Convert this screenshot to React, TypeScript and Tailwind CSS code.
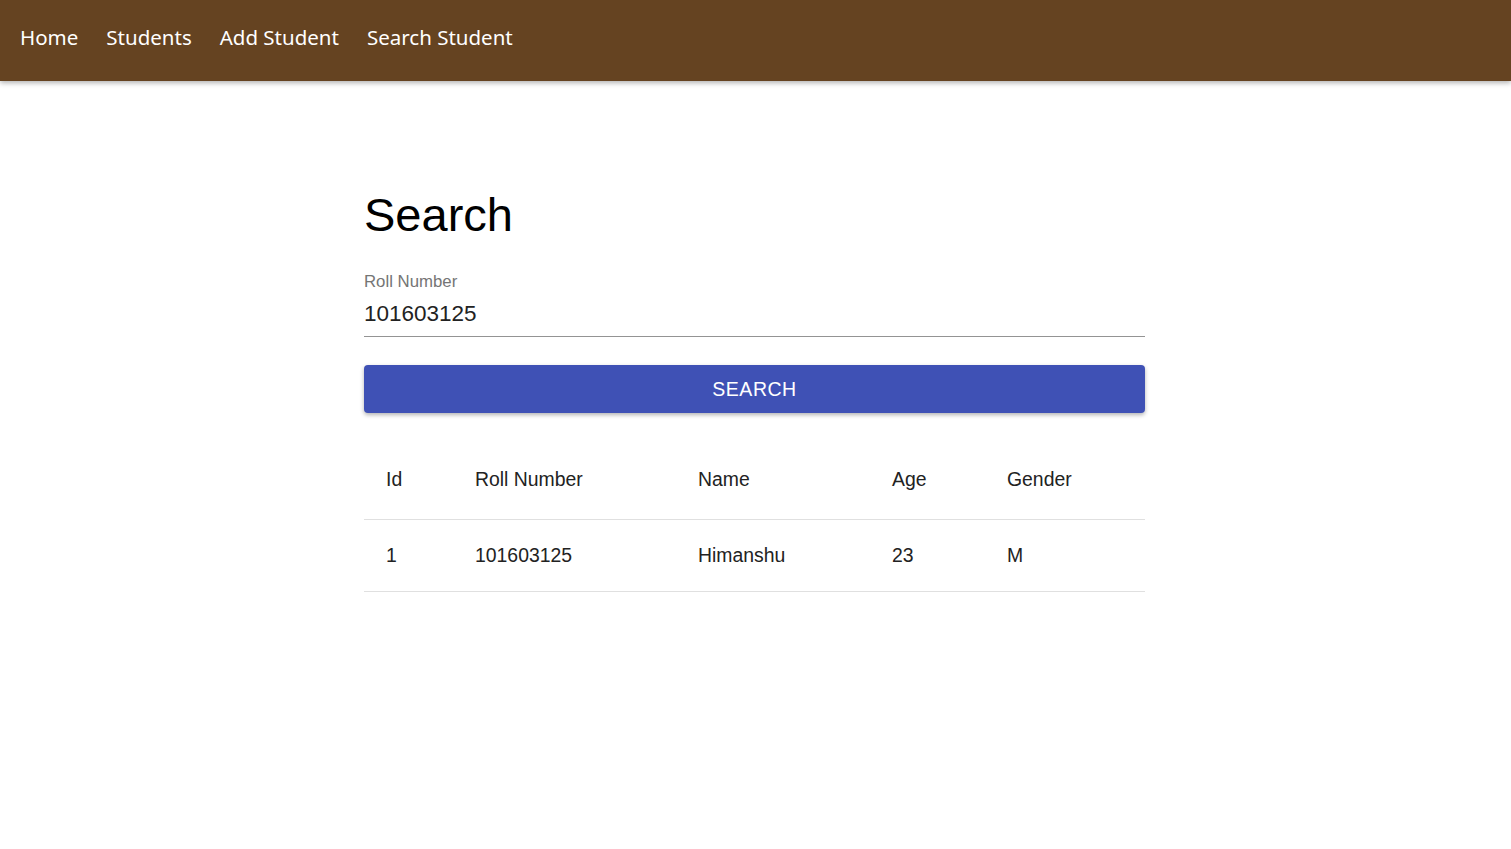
const links = ["Home", "Students", "Add Student", "Search Student"];

const cols = [
  { label: "Id", w: "w-[89px]" },
  { label: "Roll Number", w: "w-[223px]" },
  { label: "Name", w: "w-[194px]" },
  { label: "Age", w: "w-[115px]" },
  { label: "Gender", w: "flex-1" },
];

const row = ["1", "101603125", "Himanshu", "23", "M"];

const App = () => {
  return (
    <div className="min-h-[849px] bg-white">
      <nav className="h-[81px] bg-[#654321] flex items-center gap-[28px] px-[20px] pb-[7px] shadow-[0_2px_5px_rgba(0,0,0,0.3)] font-['Noto_Sans',sans-serif] text-[20.5px] text-white">
        {links.map((l) => (
          <a key={l} href="#" className="leading-none">
            {l}
          </a>
        ))}
      </nav>

      <main className="w-[781px] ml-[364px] pt-[104px] font-['Liberation_Sans',Arial,sans-serif]">
        <h1 className="text-[47px] leading-[60px] text-black">Search</h1>

        <section className="mt-[27px]">
          <label className="block text-[16.8px] leading-[19px] text-[#757575]">
            Roll Number
          </label>
          <input
            type="text"
            defaultValue="101603125"
            className="w-full mt-[9px] pb-[8px] text-[22.5px] leading-[28px] text-[#222] border-b border-[#949494] focus:outline-none"
          />
        </section>

        <button className="mt-[28px] w-full h-[48px] pt-[1px] rounded-[4px] bg-[#3f51b5] text-white text-[19.5px] tracking-[0.5px] shadow-[0_2px_4px_rgba(0,0,0,0.3)]">
          SEARCH
        </button>

        <div className="mt-[28px] text-[19.4px] text-[#222]">
          <div className="flex h-[79px] items-center border-b border-[#e0e0e0]">
            {cols.map((c) => (
              <div key={c.label} className={`${c.w} px-[22px]`}>
                {c.label}
              </div>
            ))}
          </div>
          <div className="flex h-[72px] items-center border-b border-[#e0e0e0]">
            {row.map((v, i) => (
              <div key={i} className={`${cols[i].w} px-[22px]`}>
                {v}
              </div>
            ))}
          </div>
        </div>
      </main>
    </div>
  );
};

export default App;
